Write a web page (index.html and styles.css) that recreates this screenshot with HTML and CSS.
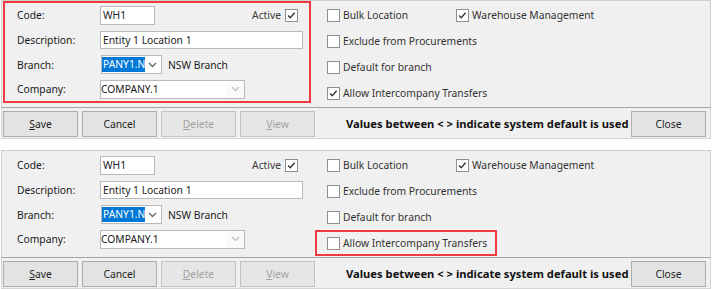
FILE: index.html
```html
<!DOCTYPE html>
<html lang="en">
<head>
    <meta charset="UTF-8">
    <title>Warehouse Location</title>
    <link rel="stylesheet" href="styles.css">
</head>
<body>
    <!-- before: intercompany transfers allowed -->
    <div class="window">
        <div class="panel">
            <div class="fields marked">
                <span class="label">Code:</span>
                <div class="field split">
                    <span class="textbox code-box">WH1</span>
                    <span class="active">Active
                        <span class="check"><svg viewBox="0 0 13 13"><path d="M2.5 6.5 L5 9.2 L10.2 3.3"/></svg></span>
                    </span>
                </div>

                <span class="label">Description:</span>
                <div class="field">
                    <span class="textbox desc-box">Entity 1 Location 1</span>
                </div>

                <span class="label">Branch:</span>
                <div class="field">
                    <span class="combo branch-box">
                        <span class="combo-text"><span class="selected">PANY1.N</span><span class="caret"></span></span>
                        <span class="arrow"><svg viewBox="0 0 9 6"><path d="M1 1 L4.5 4.5 L8 1"/></svg></span>
                    </span>
                    <span class="branch-name">NSW Branch</span>
                </div>

                <span class="label">Company:</span>
                <div class="field">
                    <span class="combo company-box disabled">
                        <span class="combo-text">COMPANY.1</span>
                        <span class="arrow"><svg viewBox="0 0 9 6"><path d="M1 1 L4.5 4.5 L8 1"/></svg></span>
                    </span>
                </div>
            </div>

            <div class="options">
                <div class="opt-row">
                    <span class="opt first"><span class="check"></span>Bulk Location</span>
                    <span class="opt"><span class="check"><svg viewBox="0 0 13 13"><path d="M2.5 6.5 L5 9.2 L10.2 3.3"/></svg></span>Warehouse Management</span>
                </div>
                <div class="opt-row">
                    <span class="opt"><span class="check"></span>Exclude from Procurements</span>
                </div>
                <div class="opt-row">
                    <span class="opt"><span class="check"></span>Default for branch</span>
                </div>
                <div class="opt-row">
                    <span class="opt"><span class="check"><svg viewBox="0 0 13 13"><path d="M2.5 6.5 L5 9.2 L10.2 3.3"/></svg></span>Allow Intercompany Transfers</span>
                </div>
            </div>
        </div>

        <div class="bar">
            <button class="btn"><u>S</u>ave</button>
            <button class="btn">Cancel</button>
            <button class="btn" disabled><u>D</u>elete</button>
            <button class="btn" disabled><u>V</u>iew</button>
            <div class="hint">Values between &lt; &gt; indicate system default is used</div>
            <button class="btn">Close</button>
        </div>
    </div>

    <!-- after: intercompany transfers switched off -->
    <div class="window">
        <div class="panel">
            <div class="fields">
                <span class="label">Code:</span>
                <div class="field split">
                    <span class="textbox code-box">WH1</span>
                    <span class="active">Active
                        <span class="check"><svg viewBox="0 0 13 13"><path d="M2.5 6.5 L5 9.2 L10.2 3.3"/></svg></span>
                    </span>
                </div>

                <span class="label">Description:</span>
                <div class="field">
                    <span class="textbox desc-box">Entity 1 Location 1</span>
                </div>

                <span class="label">Branch:</span>
                <div class="field">
                    <span class="combo branch-box">
                        <span class="combo-text"><span class="selected">PANY1.N</span><span class="caret"></span></span>
                        <span class="arrow"><svg viewBox="0 0 9 6"><path d="M1 1 L4.5 4.5 L8 1"/></svg></span>
                    </span>
                    <span class="branch-name">NSW Branch</span>
                </div>

                <span class="label">Company:</span>
                <div class="field">
                    <span class="combo company-box disabled">
                        <span class="combo-text">COMPANY.1</span>
                        <span class="arrow"><svg viewBox="0 0 9 6"><path d="M1 1 L4.5 4.5 L8 1"/></svg></span>
                    </span>
                </div>
            </div>

            <div class="options">
                <div class="opt-row">
                    <span class="opt first"><span class="check"></span>Bulk Location</span>
                    <span class="opt"><span class="check"><svg viewBox="0 0 13 13"><path d="M2.5 6.5 L5 9.2 L10.2 3.3"/></svg></span>Warehouse Management</span>
                </div>
                <div class="opt-row">
                    <span class="opt"><span class="check"></span>Exclude from Procurements</span>
                </div>
                <div class="opt-row">
                    <span class="opt"><span class="check"></span>Default for branch</span>
                </div>
                <div class="opt-row">
                    <span class="opt marked"><span class="check"></span>Allow Intercompany Transfers</span>
                </div>
            </div>
        </div>

        <div class="bar">
            <button class="btn"><u>S</u>ave</button>
            <button class="btn">Cancel</button>
            <button class="btn" disabled><u>D</u>elete</button>
            <button class="btn" disabled><u>V</u>iew</button>
            <div class="hint">Values between &lt; &gt; indicate system default is used</div>
            <button class="btn">Close</button>
        </div>
    </div>
</body>
</html>
```

FILE: styles.css
```css
* {
    box-sizing: border-box;
    margin: 0;
    padding: 0;
}

body {
    background: #ffffff;
    font-family: 'Noto Sans', 'Open Sans', sans-serif;
    font-size: 10.3px;
    color: #1e1e1e;
}

.window {
    width: 710px;
    margin-left: 1px;
    margin-bottom: 11px;
}

.panel {
    display: flex;
    height: 108px;
    background: #f0f0f0;
    border: 1px solid #cfcfcf;
    border-bottom-color: #a5a5a5;
}

/* left column: labels + inputs */
.fields {
    width: 308px;
    height: 102px;
    margin-left: 1px;
    padding-left: 12px;
    border: 2px solid transparent;
    display: grid;
    grid-template-columns: 83px 1fr;
    grid-template-rows: 24px 25px 25px 24px;
    align-items: center;
}

.marked {
    border-color: #f03a42;
}

.label {
    color: #1a1a1a;
}

.field {
    display: flex;
    align-items: center;
}

.split {
    justify-content: space-between;
    padding-right: 11px;
}

.textbox {
    display: flex;
    align-items: center;
    height: 19px;
    padding-left: 2px;
    background: #ffffff;
    border: 1px solid #b9b9b9;
    color: #222;
}

.code-box {
    width: 55px;
}

.desc-box {
    width: 203px;
    height: 18px;
}

.active {
    display: flex;
    align-items: center;
    gap: 4px;
    color: #3a3a3a;
}

.combo {
    display: flex;
    align-items: center;
    height: 19px;
    background: #ffffff;
    border: 1px solid #b9b9b9;
    overflow: hidden;
}

.combo-text {
    display: flex;
    align-items: center;
    flex: 1;
    min-width: 0;
    white-space: nowrap;
    color: #1a1a1a;
}

.branch-box {
    width: 61px;
    margin-left: 1px;
}

.selected {
    background: #0078d7;
    color: #ffffff;
    padding: 0 0 0 1px;
    line-height: 15px;
}

.caret {
    width: 1px;
    height: 15px;
    background: #1a1a1a;
}

.branch-name {
    margin-left: 6px;
    color: #1a1a1a;
}

.company-box {
    width: 145px;
}

.arrow {
    width: 17px;
    height: 100%;
    flex: none;
    display: flex;
    align-items: center;
    justify-content: center;
}

.arrow svg {
    width: 9px;
    height: 6px;
    fill: none;
    stroke: #6a6a6a;
    stroke-width: 1.4;
}

.disabled .arrow {
    background: #fafafa;
}

.disabled .arrow svg {
    stroke: #c4c4c4;
}

/* checkbox */
.check {
    width: 13px;
    height: 13px;
    flex: none;
    background: #ffffff;
    border: 1px solid #8f8f8f;
    display: flex;
}

.check svg {
    width: 11px;
    height: 11px;
    fill: none;
    stroke: #333333;
    stroke-width: 1.6;
}

/* right column: options */
.options {
    margin-left: 4px;
    padding-top: 1px;
    display: flex;
    flex-direction: column;
}

.opt-row {
    display: flex;
    height: 26px;
}

.opt {
    display: flex;
    align-items: center;
    gap: 3px;
    padding: 0 8px 0 10px;
    border: 2px solid transparent;
    color: #333333;
    white-space: nowrap;
}

.opt.first {
    width: 129px;
}

.opt.marked {
    border-color: #f03a42;
}

/* button bar */
.bar {
    display: flex;
    align-items: flex-start;
    height: 31px;
    padding: 3px 4px 0 1px;
    background: #f0f0f0;
    border: 1px solid #d6d6d6;
    border-top: none;
}

.btn {
    width: 75px;
    height: 26px;
    margin-right: 4px;
    flex: none;
    font-family: inherit;
    font-size: 10.3px;
    color: #1e1e1e;
    background: #e3e3e3;
    border: 1px solid #adadad;
}

.btn:disabled {
    color: #a3a3a3;
    border-color: #c4c4c4;
    background: #e6e6e6;
}

.btn:last-child {
    margin-right: 0;
}

.hint {
    flex: 1;
    min-width: 0;
    margin-left: 27px;
    height: 26px;
    line-height: 26px;
    overflow: hidden;
    white-space: nowrap;
    font-size: 11.2px;
    font-weight: 700;
    color: #111111;
}
```
